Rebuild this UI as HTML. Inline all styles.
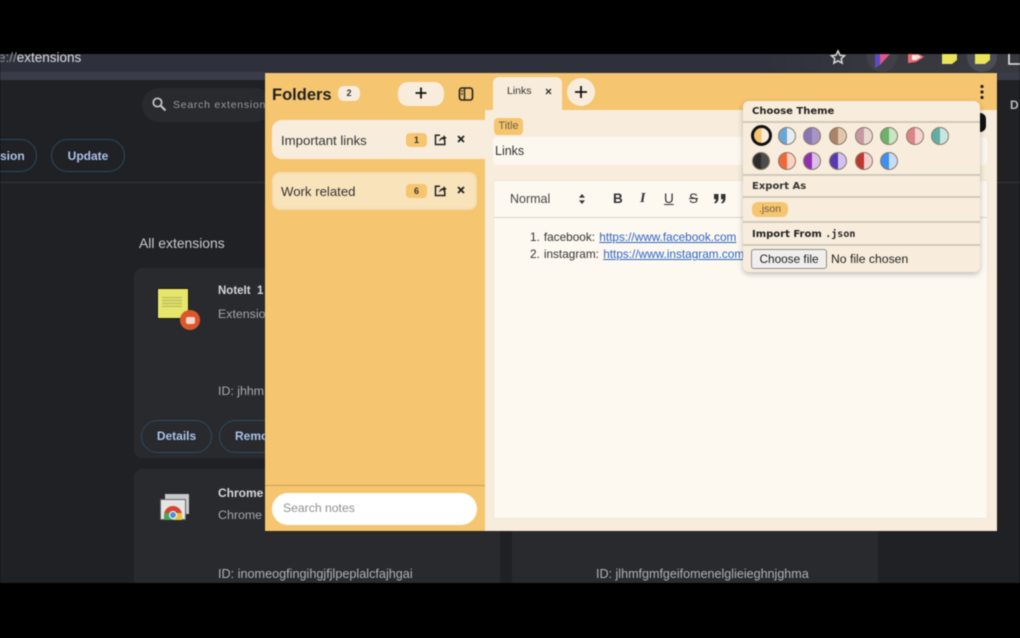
<!DOCTYPE html>
<html><head><meta charset="utf-8">
<style>
*{box-sizing:border-box}
html,body{margin:0;padding:0;width:1020px;height:638px;overflow:hidden;background:#000}
body{position:relative;font-family:"Liberation Sans",sans-serif}
#w{position:absolute;left:0;top:0;width:1020px;height:638px;overflow:hidden;filter:blur(.45px)}
.a{position:absolute}
.t{position:absolute;white-space:nowrap;line-height:1}
.pill{position:absolute;border:1px solid #2c4a63;border-radius:17px;height:33px;color:#a9c3ec;font-size:12px;font-weight:bold;text-align:center;line-height:31px}
.sw{position:absolute;width:18px;height:18px;border-radius:50%;border:1px solid #8a7a6a}
.sep{position:absolute;left:743px;width:237px;height:2px;background:#cfc8ba}
.cnt{position:absolute;width:21px;height:14px;border-radius:4px;background:#f6c56f;font-size:9px;font-weight:bold;text-align:center;line-height:14px;color:#333}
.tb{position:absolute;top:192px;font-size:13.5px;color:#333;line-height:1}
.h{position:absolute;white-space:nowrap;line-height:1;left:752px;font-size:10px;font-weight:bold;color:#222;font-family:"DejaVu Sans",sans-serif}
</style></head><body><div id="w">
<!-- browser background -->
<div class="a" style="left:0;top:54px;width:1020px;height:529px;background:#202124"></div>
<div class="a" style="left:0;top:54px;width:1020px;height:18px;background:#2e313b"></div>
<div class="a" style="left:0;top:72px;width:1020px;height:8px;background:#3a3d49"></div>
<div class="a" style="left:760px;top:54px;width:260px;height:19px;background:linear-gradient(90deg,#2e313b,#37393f 50%)"></div>
<div class="t" style="left:-2px;top:51px;font-size:13.5px;color:#8d9097">e://<span style="color:#dcdde0">extensions</span></div>
<svg class="a" style="left:828px;top:49px" width="20" height="16" viewBox="0 0 20 16"><path d="M10 2l2 4.2 4.5.5-3.3 3 .9 4.4-4.1-2.3-4.1 2.3.9-4.4-3.3-3 4.5-.5z" fill="none" stroke="#d0d0d0" stroke-width="1.6"/></svg>
<div class="a" style="left:867px;top:54px;width:30px;height:18px;background:#3f4147;border-radius:0 0 15px 15px"></div>
<div class="a" style="left:967px;top:54px;width:30px;height:18px;background:#4a4d55;border-radius:0 0 15px 15px"></div>
<svg class="a" style="left:870px;top:54px" width="150" height="14" viewBox="0 0 150 14">
<path d="M5 0h5v11l-5 3z" fill="#5b4bc0"/><path d="M10 0h10l-10 11z" fill="#e0568c"/>
<path d="M38 0h11l5 3-8 5-8 1z" fill="#e96a72"/><path d="M42 1h6l3 2-5 3-4 0z" fill="#fbe7e4"/>
<path d="M72 0h15v6l-5 4H72z" fill="#e9e45a"/>
<path d="M105 0h15v6l-5 4h-10z" fill="#e9e45a"/>
<path d="M139 0v10h11" fill="none" stroke="#e8e8e8" stroke-width="1.6"/>
</svg>
<!-- search -->
<div class="a" style="left:142px;top:88px;width:130px;height:34px;background:#292a2d;border-radius:17px"></div>
<svg class="a" style="left:151px;top:96px" width="16" height="16" viewBox="0 0 16 16"><circle cx="6.5" cy="6.5" r="4.2" fill="none" stroke="#c8c8c8" stroke-width="1.7"/><path d="M10 10l4.5 4.5" stroke="#c8c8c8" stroke-width="2"/></svg>
<div class="t" style="left:173px;top:100px;font-size:10.5px;color:#9a9b9e;letter-spacing:.75px">Search extension</div>
<div class="pill" style="left:-30px;top:139px;width:67px;padding-left:22px;text-align:left;line-height:33px"><span style="margin-left:7px">sion</span></div>
<div class="pill" style="left:51px;top:139px;width:74px;line-height:33px">Update</div>
<div class="a" style="left:0;top:182px;width:265px;height:1px;background:#33353a"></div>
<div class="a" style="left:997px;top:182px;width:23px;height:1px;background:#33353a"></div>
<div class="t" style="left:139px;top:237px;font-size:13.9px;color:#c9cace">All extensions</div>
<div class="t" style="left:1010px;top:99px;font-size:12px;font-weight:bold;color:#b8b9bc">D</div>
<!-- cards -->
<div class="a" style="left:134px;top:268px;width:140px;height:190px;background:#292a2d;border-radius:8px"></div>
<div class="a" style="left:134px;top:469px;width:366px;height:114px;background:#292a2d;border-radius:8px 8px 0 0"></div>
<div class="a" style="left:512px;top:531px;width:366px;height:52px;background:#292a2d"></div>
<div class="a" style="left:157px;top:288px;width:32px;height:31px;background:#e6e66c;border:1px solid #1a1a10"></div>
<div class="a" style="left:162px;top:297px;width:20px;height:10px;background:repeating-linear-gradient(#b9ba5a 0 1px,#dede6a 1px 3px)"></div>
<div class="a" style="left:180px;top:310px;width:20px;height:20px;border-radius:50%;background:#d9582b"></div>
<div class="a" style="left:186px;top:317px;width:9px;height:7px;border-radius:2px;background:#f8d8cc"></div>
<div class="t" style="left:218px;top:286px;font-size:11.5px;color:#d5d6d8;font-weight:bold">NoteIt&nbsp; 1</div>
<div class="t" style="left:218px;top:308px;font-size:12.4px;color:#a5a6a9">Extensio</div>
<div class="t" style="left:218px;top:385px;font-size:12.4px;color:#a9aaad">ID: jhhm</div>
<div class="pill" style="left:141px;top:420px;width:71px;height:33px">Details</div>
<div class="pill" style="left:219px;top:420px;width:70px;height:33px;text-align:left;padding-left:15px">Remo</div>
<div class="a" style="left:165px;top:494px;width:24px;height:20px;background:#c8c8c8"></div>
<div class="a" style="left:160px;top:499px;width:26px;height:21px;background:#e4e4e4;border:1px solid #666"></div>
<div class="a" style="left:164px;top:506px;width:18px;height:14px;border-radius:9px 9px 0 0;background:conic-gradient(from 270deg,#d8432f 0 50%,#e9c13b 50% 75%,#4aa35a 75%)"></div>
<div class="a" style="left:169px;top:511px;width:8px;height:8px;border-radius:50%;background:#4a8fe0;border:1px solid #fff"></div>
<div class="t" style="left:218px;top:487px;font-size:12px;color:#d5d6d8;font-weight:bold">Chrome</div>
<div class="t" style="left:218px;top:509px;font-size:12.4px;color:#a5a6a9">Chrome</div>
<div class="t" style="left:218px;top:568px;font-size:12.65px;color:#b0b1b4">ID: inomeogfingihgjfjlpeplalcfajhgai</div>
<div class="t" style="left:596px;top:568px;font-size:12.55px;color:#b0b1b4">ID: jlhmfgmfgeifomenelglieieghnjghma</div>

<!-- panel -->
<div class="a" style="left:265px;top:73px;width:732px;height:458px;background:#f8eddc;box-shadow:0 0 1px #111"></div>
<div class="a" style="left:265px;top:73px;width:220px;height:458px;background:#f6c56f"></div>
<div class="a" style="left:485px;top:73px;width:512px;height:37px;background:#f6c56f"></div>
<!-- sidebar header -->
<div class="t" style="left:272px;top:87px;font-size:16.5px;font-weight:bold;color:#222">Folders</div>
<div class="a" style="left:338px;top:86px;width:22px;height:15px;border-radius:6px;background:#f8eddc;font-size:9px;font-weight:bold;text-align:center;line-height:15px;color:#333">2</div>
<div class="a" style="left:398px;top:82px;width:46px;height:24px;border-radius:10px;background:#f8eddc"></div>
<svg class="a" style="left:413px;top:85px" width="16" height="16" viewBox="0 0 16 16"><path d="M8 2.5v11M2.5 8h11" stroke="#111" stroke-width="1.8"/></svg>
<svg class="a" style="left:458px;top:86px" width="16" height="16" viewBox="0 0 16 16"><rect x="1.5" y="2" width="13" height="12" rx="2.5" fill="none" stroke="#222" stroke-width="1.6"/><path d="M6.5 2v12M3.2 5h1.6M3.2 8h1.6" stroke="#222" stroke-width="1.4"/></svg>
<!-- folders -->
<div class="a" style="left:272px;top:120px;width:213px;height:39px;background:#f8eddc;border-radius:10px 0 0 10px"></div>
<div class="a" style="left:272px;top:172px;width:205px;height:38px;background:#f8e3bb;border-radius:8px;box-shadow:inset 0 0 3px #e8cf9c"></div>
<div class="a" style="left:470px;top:103px;width:15px;height:17px;background:#f6c56f;border-radius:0 0 8px 0"></div>
<div class="t" style="left:281px;top:133.5px;font-size:13.2px;color:#333">Important links</div>
<div class="t" style="left:281px;top:184.5px;font-size:13.2px;color:#333">Work related</div>
<div class="cnt" style="left:406px;top:133px">1</div>
<div class="cnt" style="left:406px;top:184px">6</div>
<svg class="a" style="left:434px;top:133px" width="13" height="13" viewBox="0 0 13 13"><path d="M6 2.2H1.5v9.3h9.3V7" fill="none" stroke="#222" stroke-width="1.5"/><path d="M5 8.5c.3-2.6 2-4.3 4.5-4.5V2l3 3-3 3V6C7.8 6 6.3 7 5 8.5z" fill="#222"/></svg>
<svg class="a" style="left:434px;top:184px" width="13" height="13" viewBox="0 0 13 13"><path d="M6 2.2H1.5v9.3h9.3V7" fill="none" stroke="#222" stroke-width="1.5"/><path d="M5 8.5c.3-2.6 2-4.3 4.5-4.5V2l3 3-3 3V6C7.8 6 6.3 7 5 8.5z" fill="#222"/></svg>
<svg class="a" style="left:456px;top:134px" width="10" height="10" viewBox="0 0 10 10"><path d="M2 2l6 6M8 2l-6 6" stroke="#222" stroke-width="1.8"/></svg>
<svg class="a" style="left:456px;top:185px" width="10" height="10" viewBox="0 0 10 10"><path d="M2 2l6 6M8 2l-6 6" stroke="#222" stroke-width="1.8"/></svg>
<!-- search notes -->
<div class="a" style="left:265px;top:485px;width:220px;height:1px;background:#c9a25f"></div>
<div class="a" style="left:272px;top:493px;width:205px;height:32px;background:#fff;border-radius:16px"></div>
<div class="t" style="left:283px;top:502px;font-size:12.2px;color:#8f8f8f">Search notes</div>
<!-- tabs -->
<div class="a" style="left:493px;top:77px;width:69px;height:33px;background:#f8eddc;border-radius:6px 6px 0 0"></div>
<div class="t" style="left:507px;top:86px;font-size:10.5px;color:#333">Links</div>
<svg class="a" style="left:545px;top:88px" width="7" height="7" viewBox="0 0 7 7"><path d="M1 1l5 5M6 1l-5 5" stroke="#333" stroke-width="1.3"/></svg>
<div class="a" style="left:567px;top:78px;width:28px;height:28px;border-radius:50%;background:#f8eddc"></div>
<svg class="a" style="left:573px;top:84px" width="16" height="16" viewBox="0 0 16 16"><path d="M8 2v12M2 8h12" stroke="#111" stroke-width="1.8"/></svg>
<svg class="a" style="left:979px;top:84px" width="6" height="16" viewBox="0 0 6 16"><circle cx="3" cy="2.5" r="1.6" fill="#222"/><circle cx="3" cy="8" r="1.6" fill="#222"/><circle cx="3" cy="13.5" r="1.6" fill="#222"/></svg>
<!-- title -->
<div class="a" style="left:494px;top:118px;width:29px;height:17px;background:#f6c56f;border-radius:4px;font-size:10.8px;text-align:center;line-height:17px;color:#6f5f40">Title</div>
<div class="a" style="left:493px;top:137px;width:494px;height:28px;background:#fcf7ef;border-radius:4px"></div>
<div class="t" style="left:495px;top:145px;font-size:12.5px;color:#333">Links</div>
<div class="a" style="left:978px;top:113px;width:8px;height:19px;background:#111;border-radius:0 6px 6px 0"></div>
<!-- editor -->
<div class="a" style="left:493px;top:180px;width:495px;height:339px;background:#fdf8f0;border:1.5px solid #ece6da"></div>
<div class="a" style="left:494px;top:217px;width:493px;height:1px;background:#d8d4cc"></div>
<div class="t" style="left:510px;top:193px;font-size:12.5px;color:#444">Normal</div>
<svg class="a" style="left:578px;top:193px" width="8" height="12" viewBox="0 0 8 12"><path d="M4 1l3 3.6H1zM4 11l3-3.6H1z" fill="#333"/></svg>
<div class="tb" style="left:613px;font-weight:bold">B</div>
<div class="tb" style="left:640px;font-family:'Liberation Serif',serif;font-style:italic;font-weight:bold;font-size:14px">I</div>
<div class="tb" style="left:664px;text-decoration:underline">U</div>
<div class="tb" style="left:689px;text-decoration:line-through">S</div>
<svg class="a" style="left:713px;top:193px" width="14" height="11" viewBox="0 0 14 11"><path d="M1 1h4.5v4.5C5.5 8 4 10 1.8 10.5L1.2 9.2C2.4 8.7 3 7.6 3 6.2H1zM8 1h4.5v4.5c0 2.5-1.5 4.5-3.7 5L8.2 9.2C9.4 8.7 10 7.6 10 6.2H8z" fill="#333"/></svg>
<div class="t" style="left:530px;top:232px;font-size:11.8px;color:#333">1.<span style="margin-left:4px">facebook:</span> <a style="color:#2f66c4;text-decoration:underline;margin-left:1px">https://www.facebook.com</a></div>
<div class="t" style="left:530px;top:249px;font-size:11.8px;color:#333">2.<span style="margin-left:4px">instagram:</span> <a style="color:#2f66c4;text-decoration:underline;margin-left:1px">https://www.instagram.com</a></div>
<!-- dropdown -->
<div class="a" style="left:743px;top:101px;width:237px;height:171px;background:#f8eddc;border-radius:6px;box-shadow:0 2px 6px rgba(0,0,0,.25)"></div>
<div class="h" style="top:107px">Choose Theme</div>
<div class="sep" style="top:121px"></div>
<div class="sep" style="top:174px"></div>
<div class="h" style="top:182px;color:#333">Export As</div>
<div class="sep" style="top:196px"></div>
<div class="a" style="left:752px;top:202px;width:36px;height:15px;border-radius:6px;background:#f6c56f;font-size:10.5px;text-align:center;line-height:15px;color:#6f5f40">.json</div>
<div class="sep" style="top:221px"></div>
<div class="h" style="top:230px">Import From <span style="font-family:'DejaVu Sans Mono',monospace;font-size:10px">.json</span></div>
<div class="sep" style="top:244px"></div>
<div class="a" style="left:751px;top:249px;width:76px;height:20px;background:#f0efed;border:1px solid #8d8d8d;border-radius:3px;font-size:11.8px;text-align:center;line-height:18px;color:#222">Choose file</div>
<div class="t" style="left:831px;top:253px;font-size:12.2px;color:#222">No file chosen</div>
<!-- swatches -->
<div class="sw" style="left:751px;top:125px;width:21px;height:21px;border:3px solid #111;background:linear-gradient(90deg,#f6c56f 50%,#f8eddc 50%)"></div>
<div class="sw" style="left:778px;top:127px;background:linear-gradient(90deg,#6aa5d8 50%,#e6eef2 50%)"></div>
<div class="sw" style="left:803px;top:127px;background:linear-gradient(90deg,#8a76b4 50%,#a696c6 50%)"></div>
<div class="sw" style="left:829px;top:127px;background:linear-gradient(90deg,#a9826a 50%,#e2c6ac 50%)"></div>
<div class="sw" style="left:855px;top:127px;background:linear-gradient(90deg,#c49aa0 50%,#ecd9d4 50%)"></div>
<div class="sw" style="left:880px;top:127px;background:linear-gradient(90deg,#6bb26c 50%,#c9e5c2 50%)"></div>
<div class="sw" style="left:906px;top:127px;background:linear-gradient(90deg,#dd8388 50%,#f6d3d0 50%)"></div>
<div class="sw" style="left:931px;top:127px;background:linear-gradient(90deg,#5fb0a4 50%,#c6e6de 50%)"></div>
<div class="sw" style="left:752px;top:152px;background:linear-gradient(90deg,#2c2c2c 50%,#4c4c4c 50%)"></div>
<div class="sw" style="left:778px;top:152px;background:linear-gradient(90deg,#f0683a 50%,#fbd1c0 50%)"></div>
<div class="sw" style="left:803px;top:152px;background:linear-gradient(90deg,#9030b0 50%,#dcbfe8 50%)"></div>
<div class="sw" style="left:829px;top:152px;background:linear-gradient(90deg,#5a38b0 50%,#d0c2ec 50%)"></div>
<div class="sw" style="left:855px;top:152px;background:linear-gradient(90deg,#c0372f 50%,#f6cfd2 50%)"></div>
<div class="sw" style="left:880px;top:152px;background:linear-gradient(90deg,#3f90ee 50%,#c4defa 50%)"></div>
</div></body></html>
